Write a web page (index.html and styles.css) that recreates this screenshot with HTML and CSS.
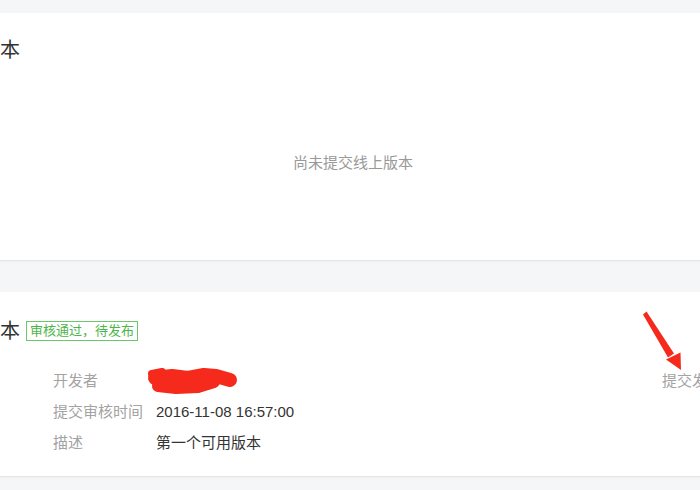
FILE: index.html
```html
<!DOCTYPE html>
<html lang="zh-CN">
<head>
<meta charset="utf-8">
<title>版本管理</title>
<link rel="stylesheet" href="styles.css">
</head>
<body>
<div class="page">
  <section class="card card-online">
    <div class="head"><h2 class="title">线上版本</h2></div>
    <div class="empty">尚未提交线上版本</div>
  </section>
  <section class="card card-review">
    <div class="head">
      <h2 class="title">审核版本</h2>
      <span class="badge">审核通过，待发布</span>
    </div>
    <div class="body">
      <div class="info">
        <div class="label">开发者</div>
        <div class="value">
          <svg class="redact" width="95" height="31" viewBox="145 365 95 31" aria-hidden="true">
            <path d="M155 378 L172 376 L188 378 L204 375 L216 376 L230 380" fill="none" stroke="#f52a1c" stroke-width="14" stroke-linecap="round" stroke-linejoin="round"/>
            <path d="M158 386 L176 388 L198 387 L214 382" fill="none" stroke="#f52a1c" stroke-width="12" stroke-linecap="round" stroke-linejoin="round"/>
            <path d="M152 374 L162 372" fill="none" stroke="#f52a1c" stroke-width="8" stroke-linecap="round"/>
          </svg>
        </div>
        <div class="label">提交审核时间</div>
        <div class="value">2016-11-08 16:57:00</div>
        <div class="label">描述</div>
        <div class="value">第一个可用版本</div>
      </div>
      <a class="action">提交发布</a>
    </div>
    <svg class="arrow" width="46" height="66" viewBox="640 308 46 66" aria-hidden="true">
      <polygon points="643,314.5 646.5,311.5 674,353.5 668,357.5" fill="#f52a1c"/>
      <polygon points="666,359.5 680.5,352.5 681,370" fill="#f52a1c"/>
    </svg>
  </section>
</div>
</body>
</html>
```

FILE: styles.css
```css
html, body {
  margin: 0;
  padding: 0;
}
body {
  background: #f5f6f8;
  overflow: hidden;
  font-family: "Liberation Sans", "Noto Sans CJK SC", sans-serif;
  color: #333;
  width: 700px;
  height: 490px;
}
.page {
  margin-left: -60px;
  width: 826px;
  padding-top: 13px;
}
.card {
  position: relative;
  background: #fff;
  border-bottom: 1px solid #e4e5e7;
  box-shadow: 0 1px 2px rgba(0, 0, 0, 0.03);
}
.card + .card {
  margin-top: 31px;
}
.card-online {
  padding-top: 23px;
}
.card-review {
  padding: 25px 44px 18px 0;
}
.head {
  display: flex;
  align-items: center;
  height: 28px;
}
.title {
  margin: 0;
  font-size: 20px;
  font-weight: normal;
  line-height: 28px;
  color: #333;
}
.badge {
  margin-left: 6px;
  padding: 0 3px;
  border: 1px solid #6cc66a;
  color: #4cb54a;
  font-size: 13px;
  line-height: 18px;
}
.empty {
  padding: 89px 0 87px;
  line-height: 20px;
  font-size: 15px;
  color: #999;
  text-align: center;
}
.body {
  display: flex;
  align-items: flex-start;
  margin-top: 20px;
  padding-left: 113px;
}
.info {
  display: grid;
  grid-template-columns: 103px auto;
  font-size: 15px;
  line-height: 31px;
}
.label {
  color: #a3a3a3;
}
.value {
  color: #333;
}
.redact {
  display: block;
  margin-left: -11px;
}
.action {
  margin-left: auto;
  font-size: 15px;
  line-height: 31px;
  color: #a3a3a3;
  cursor: pointer;
}
.arrow {
  position: absolute;
  left: 700px;
  top: 16px;
}
```
